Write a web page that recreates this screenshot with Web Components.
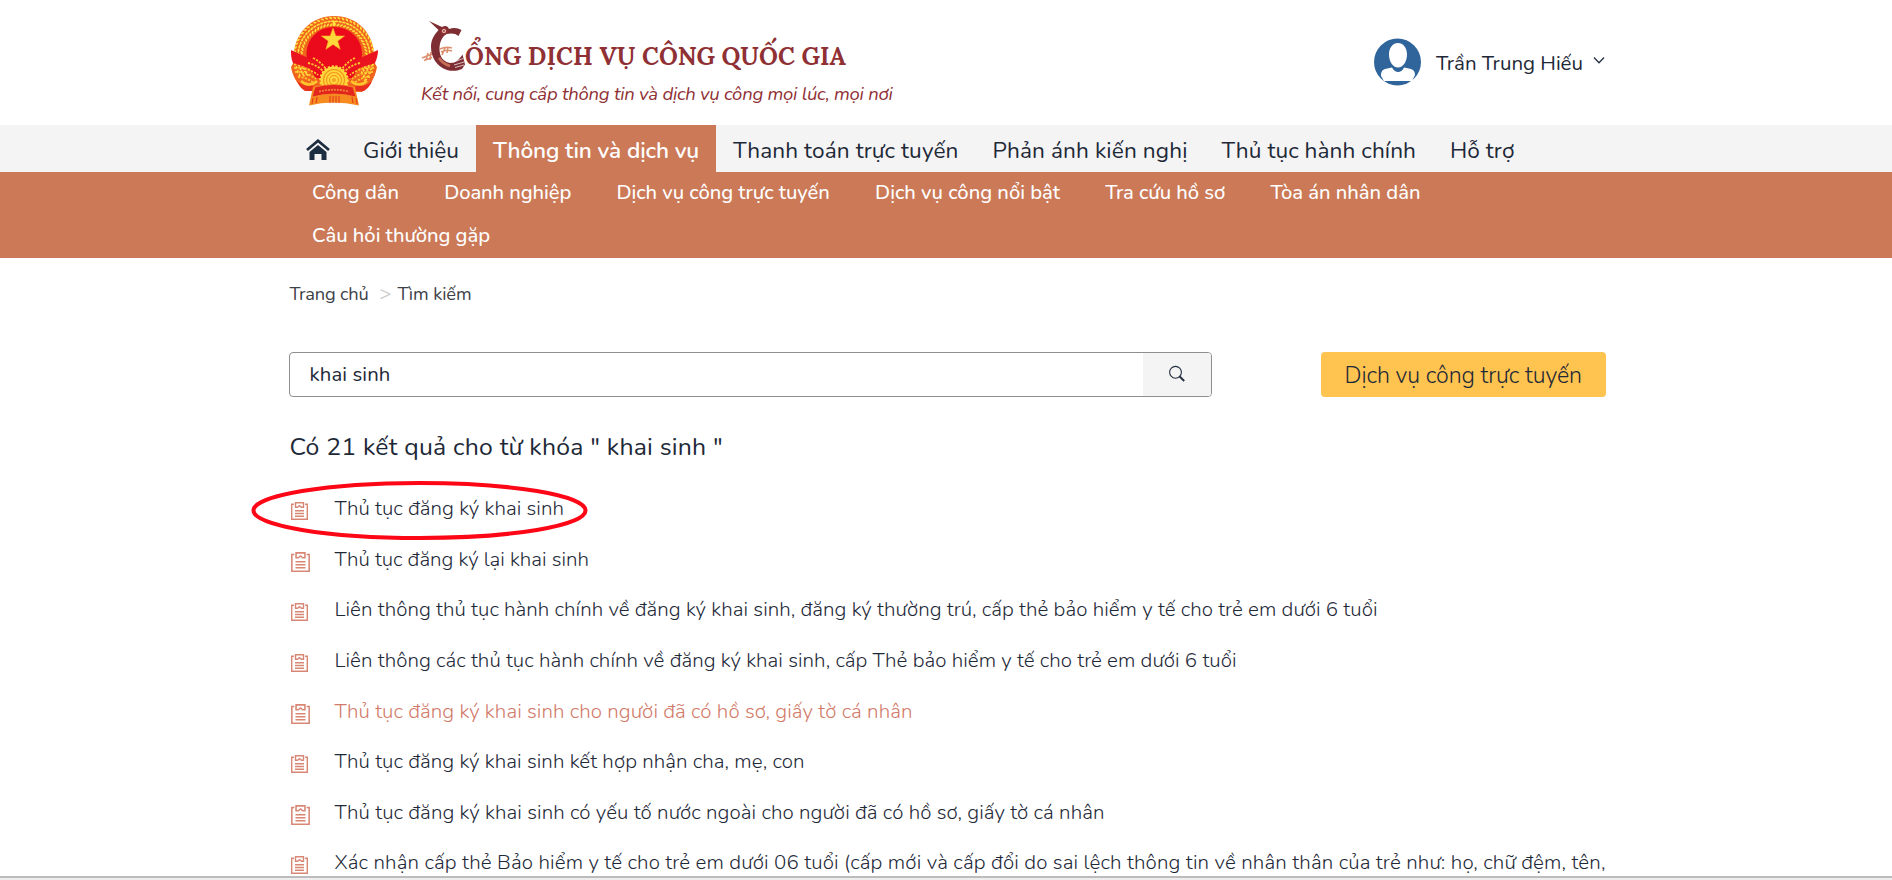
<!DOCTYPE html>
<html lang="vi">
<head>
<meta charset="utf-8">
<title>Cổng Dịch vụ công Quốc gia</title>
<style>
  :root {
    --ink: #1e2938;
    --brand: #cb7957;
    --maroon: #8f3034;
    --grey: #f4f4f4;
    --yellow: #ffc34f;
  }

  body {
    margin: 0;
    height: 880px;
    overflow: hidden;
    background: #fff;
    color: var(--ink);
    font-family: Nunito, 'Open Sans', 'Noto Sans', sans-serif;
  }
</style>
</head>
<body>
<portal-page>
  <portal-header slot="header" user="Trần Trung Hiếu"></portal-header>
  <portal-nav slot="nav"></portal-nav>
  <bread-crumb></bread-crumb>
  <search-bar value="khai sinh"></search-bar>
  <result-list></result-list>
</portal-page>

<script>
class BaseElement extends HTMLElement {
  constructor() {
    super();
    this.attachShadow({ mode: 'open' });
  }

  connectedCallback() {
    const template = document.createElement('template');
    template.innerHTML = this.render();
    this.shadowRoot.appendChild(template.content.cloneNode(true));
  }
}

// One line of text, tracked so that it fills the given width
class FitText extends BaseElement {
  connectedCallback() {
    super.connectedCallback();
    const span = this.shadowRoot.querySelector('span');
    const width = Number(this.getAttribute('width'));
    const count = this.textContent.length;
    const spacing = (width - span.getBoundingClientRect().width) / count;
    span.style.letterSpacing = `${spacing.toFixed(3)}px`;
  }

  render() {
    return `
      <style>
        :host { display: inline-block; white-space: nowrap; }
        span { display: inline-block; }
      </style>
      <span><slot></slot></span>
    `;
  }
}

class PortalPage extends BaseElement {
  render() {
    return `
      <style>
        :host { display: flex; flex-direction: column; height: 880px; }
        .view { height: 876px; overflow: hidden; flex: none; }
        main { margin: 0 286px 0 290px; }
        footer { height: 2px; flex: none; background: #eee; border-top: 2px solid #bcbcbc; }
      </style>
      <div class="view">
        <slot name="header"></slot>
        <slot name="nav"></slot>
        <main><slot></slot></main>
      </div>
      <footer></footer>
    `;
  }
}

class NationalEmblem extends BaseElement {
  render() {
    let grains = '';
    [32.5, 36, 39.5].forEach((r, row) => {
      for (let a = -215; a <= 35; a += 6) {
        const rad = ((a + row * 3) * Math.PI) / 180;
        const x = 48 + r * Math.cos(rad);
        const y = 44.5 + r * 0.98 * Math.sin(rad);
        grains += `<ellipse cx="${x.toFixed(1)}" cy="${y.toFixed(1)}" rx="1.8" ry=".9" transform="rotate(${a + 50 + row * 40} ${x.toFixed(1)} ${y.toFixed(1)})"/>`;
      }
    });

    return `
      <style>
        :host { display: block; width: 98px; height: 98px; }
        svg { display: block; }
      </style>
      <svg width="98" height="98" viewBox="0 0 98 98">
        <path d="M48 4C25 4 8 22 8 44c0 5-1 8-3 11 2 12 8 19 16 24l55 1c7-5 13-13 15-25-2-3-3-6-3-11C88 22 72 4 48 4z" fill="#f0641d"/>
        <g fill="#ffe03e">${grains}</g>
        <path d="M48 15C32 15 20.500 27 20.500 42c0 8 3.500 16 9.500 24h36c6-8 10-16 10-24C76 27 64 15 48 15z" fill="#ea0a1c"/>
        <path d="M5 38l28 13 7 6-3 4-8-3L7 51c-2-4-2-9-2-13zM92 38L63 51l-7 6 3 4 8-3 22-7c2-4 3-9 3-13z" fill="#ea1420"/>
        <g fill="none" stroke="#ffc52f" stroke-width="1.800" stroke-dasharray="2.200 1.300">
          <path d="M8 56q12-2 24 7M9 60q10-1 21 7M12 65q8 0 16 6M27 46q8 4 13 11M22 51q9 2 15 8"/>
          <path d="M88 56q-12-2-24 7M87 60q-10-1-21 7M84 65q-8 0-16 6M69 46q-8 4-13 11M74 51q-9 2-15 8"/>
        </g>
        <path d="M47 16l2.800 7.900 8.700.1-6.800 5.100 2.500 8.200-7.200-4.900-7.100 4.900 2.400-8.200-6.900-5.100 8.800-.1z" fill="#ffd93c" stroke="#f8ae25" stroke-width=".6"/>
        <path d="M48 9v5" stroke="#ffe23e" stroke-width="2.500"/>
        <circle cx="48" cy="68" r="13.500" fill="#ffd63b" stroke="#ffd63b" stroke-width="2.400" stroke-dasharray="2.200 1.600"/>
        <g fill="none" stroke="#f2941d" stroke-width="1.100"><circle cx="48" cy="68" r="10.500"/><circle cx="48" cy="68" r="7.500"/><circle cx="48" cy="68" r="4.500"/></g>
        <circle cx="48" cy="68" r="2" fill="#f2a325"/>
        <path d="M11 69q8 7 15 4l5 6H19q-6-4-8-10zM86 69q-8 7-15 4l-5 6h12q6-4 8-10z" fill="#e9301f"/>
        <path d="M15 69q8 7 16 0M81 69q-8 7-16 0" fill="none" stroke="#ffc52e" stroke-width="2.400"/>
        <path d="M27 75l-4 18.500q24-6 50 0l-4-18.500q-21-5-42 0z" fill="#f68b20"/>
        <path d="M29 75q19-5 38 0l3 10q-22-6-44 0z" fill="#e3261d" stroke="#f6952a" stroke-width=".7"/>
        <path d="M33 79.500q15-3.500 30 0" fill="none" stroke="#f0803a" stroke-width="1.800" stroke-dasharray="2 1"/>
        <path d="M27 86l-1 6M31 85l-1 6M66 85l1 6M70 86l1 6M44 84v7M47 84v7M50 84v7M53 84v7" stroke="#e4341d" stroke-width="1"/>
      </svg>
    `;
  }
}

// Decorative bird curled in front of the site title
class BirdMark extends BaseElement {
  render() {
    return `
      <style>
        :host { display: block; width: 60px; height: 60px; }
        svg { display: block; }
      </style>
      <svg width="60" height="60" viewBox="0 0 60 60">
        <g stroke="#dc9070" stroke-width="1.600" fill="none">
          <path d="M7 43l10-4M9 45.500l8-3M13 38l-2 7M16 37l-1 8"/>
          <path d="M25 34q6-3 12-1M26 37q5-3 11-1M27 40l3-7M32 38l1-6"/>
        </g>
        <path d="M14 6l13 6c3-2 6-1 7 2 5-2 9-1 12.500 1l-3 6c-3-3-8-3-12-2-5 3-7 9-7 15 0 8 4 13 11 14 5 0 9-4 12-8.500l2.500 10-3 4.500c-5 2-10 2.500-15 1C22 52 16 42 16 32c0-7 3-12 7.500-17z" fill="#7e2d33"/>
        <path d="M38 47.500l10-4M39 50l10-3M40 52.500l9-2.500" stroke="#fff" stroke-width=".7"/>
        <path d="M24 43q4 6 11 8" stroke="#c96d57" stroke-width="2.600" fill="none"/>
        <circle cx="29" cy="16" r="3.800" fill="#8f3034"/>
        <circle cx="29" cy="16" r="2" fill="#f2cdc2"/>
        <circle cx="29" cy="16" r=".9" fill="#8f3034"/>
      </svg>
    `;
  }
}

class PortalHeader extends BaseElement {
  render() {
    return `
      <style>
        :host { display: flex; height: 125px; padding: 0 286px 0 286px; box-sizing: border-box; }
        national-emblem { margin-top: 12px; }
        .brand { margin-left: 31px; padding-top: 15px; color: var(--maroon); flex: 1; }
        .title { display: flex; height: 60px; }
        .title fit-text {
          margin: 20px 0 0 -10px;
          font: 700 24.500px/42px Lora, 'Liberation Serif', serif;
        }
        .tagline { margin: 5px 0 0 6px; font-style: italic; font-size: 18.500px; line-height: 28px; }
        .user { display: flex; height: 47px; margin-top: 38px; }
        .user fit-text { margin-left: 15px; font-size: 20.500px; line-height: 51px; }
        .chevron { margin: 18px 0 0 10px; }
      </style>
      <national-emblem></national-emblem>
      <div class="brand">
        <div class="title">
          <bird-mark></bird-mark>
          <fit-text width="381">ỔNG DỊCH VỤ CÔNG QUỐC GIA</fit-text>
        </div>
        <div class="tagline"><fit-text width="471.500">Kết nối, cung cấp thông tin và dịch vụ công mọi lúc, mọi nơi</fit-text></div>
      </div>
      <div class="user">
        <svg width="47" height="48" viewBox="0 0 47 48">
          <circle cx="23.500" cy="24" r="23.500" fill="#30659b"/>
          <path d="M24 5c5 0 9 4.500 9 11.500S29 29.500 24 29.500 15 23.500 15 16.500 19 5 24 5zM7 38c0-4 1-6 4-7l7-1.500c2 3.500 4 4.500 6 4.500s5-1.500 6-4.500l7 1.500c3 1 4 3 4 6l-3 6H10z" fill="#fff"/>
        </svg>
        <fit-text width="147">${this.getAttribute('user')}</fit-text>
        <svg class="chevron" width="13" height="10" viewBox="0 0 13 10"><path d="M1 1.500l5 5.200 5-5.200" fill="none" stroke="#242f40" stroke-width="1.300"/></svg>
      </div>
    `;
  }
}

class PortalNav extends BaseElement {
  render() {
    const items = [
      ['Giới thiệu', 96],
      ['Thông tin và dịch vụ', 206],
      ['Thanh toán trực tuyến', 225.5],
      ['Phản ánh kiến nghị', 195],
      ['Thủ tục hành chính', 194.5],
      ['Hỗ trợ', 64.5]
    ];
    const rows = [
      [['Công dân', 87], ['Doanh nghiệp', 127], ['Dịch vụ công trực tuyến', 213.5], ['Dịch vụ công nổi bật', 185], ['Tra cứu hồ sơ', 120], ['Tòa án nhân dân', 150]],
      [['Câu hỏi thường gặp', 178]]
    ];

    return `
      <style>
        :host { display: block; }
        nav { display: flex; height: 47px; padding-left: 290px; background: var(--grey); font-size: 22.600px; line-height: 51px; }
        .home { width: 24px; height: 21px; padding: 14px 16px 0; }
        .item { padding: 0 17px; }
        .active { background: var(--brand); color: #fff; font-weight: 600; }
        .sub { height: 86px; padding-left: 312px; background: var(--brand); color: #fff; font-size: 20.200px; font-weight: 500; }
        .row { display: flex; gap: 45.200px; height: 43px; line-height: 42px; }
      </style>
      <nav>
        <svg class="home" viewBox="0 0 24 21">
          <path d="M1 11L12 1.800 23 11" fill="none" stroke="#1d2d40" stroke-width="2.800"/>
          <path d="M12 6l8.500 7v8h-5v-6h-7v6h-5v-8z" fill="#1d2d40"/>
        </svg>
        ${items.map(([label, width], i) => `<span class="item ${i === 1 ? 'active' : ''}"><fit-text width="${width}">${label}</fit-text></span>`).join('')}
      </nav>
      <div class="sub">
        ${rows.map(row => `<div class="row">${row.map(([label, width]) => `<fit-text width="${width}">${label}</fit-text>`).join('')}</div>`).join('')}
      </div>
    `;
  }
}

class BreadCrumb extends BaseElement {
  render() {
    return `
      <style>
        :host { display: flex; margin-left: -.5px; padding-top: 22px; height: 28px; font-size: 18.300px; line-height: 28px; color: #3d4148; }
        .sep { width: 11px; margin: 0 7px 0 11px; color: #ccc; font-size: 20px; }
      </style>
      <fit-text width="79">Trang chủ</fit-text>
      <span class="sep">&gt;</span>
      <fit-text width="74">Tìm kiếm</fit-text>
    `;
  }
}

class SearchBar extends BaseElement {
  render() {
    return `
      <style>
        :host { display: flex; justify-content: space-between; margin: 44px 0 0 -1px; height: 45px; }
        .field {
          display: flex;
          justify-content: space-between;
          width: 923px;
          box-sizing: border-box;
          padding-left: 19.500px;
          border: 1px solid #8f8f93;
          border-radius: 4px;
          overflow: hidden;
          font-size: 20.300px;
          line-height: 43px;
        }
        .go { display: flex; width: 68px; background: var(--grey); }
        .go svg { margin: 12px 0 0 25px; }
        .online { width: 285px; border-radius: 4px; background: var(--yellow); font-size: 23.200px; line-height: 48px; font-weight: 300; }
        .online fit-text { margin-left: 23.500px; }
      </style>
      <div class="field">
        <fit-text width="81">${this.getAttribute('value')}</fit-text>
        <div class="go">
          <svg width="18" height="18" viewBox="0 0 18 18" fill="none" stroke="#242f40">
            <circle cx="7.500" cy="7.300" r="5.900" stroke-width="1.100"/>
            <path d="M11.700 11.500l4.500 4.500" stroke-width="1.900"/>
          </svg>
        </div>
      </div>
      <div class="online"><fit-text width="237.500">Dịch vụ công trực tuyến</fit-text></div>
    `;
  }
}

class ResultItem extends BaseElement {
  render() {
    const size = this.hasAttribute('large') ? 19 : 17;

    return `
      <style>
        :host { display: flex; height: 50.600px; font-size: 20.500px; font-weight: 300; line-height: 53px; }
        :host([active]) { color: #d27a69; }
        .icon { width: 44.500px; flex: none; padding: 19.500px 0 0 .5px; box-sizing: border-box; }
        svg { display: block; }
      </style>
      <div class="icon">
        <svg width="${size}" height="${size + 1}" viewBox="0 0 17 18" fill="none" stroke="#d88775" stroke-width="1.400">
          <path d="M3 2.200H.7v15.100h15.600V2.200H14"/>
          <path d="M4.500 .8h8v4.400h-2L8.500 3.600 6.500 5.200h-2z"/>
          <path d="M4 8.700h9M4 11.500h9M4 14.200h9"/>
        </svg>
      </div>
      <fit-text width="${this.getAttribute('width')}">${this.textContent}</fit-text>
    `;
  }
}

class ResultList extends BaseElement {
  render() {
    const results = [
      ['Thủ tục đăng ký khai sinh', 229.5, ''],
      ['Thủ tục đăng ký lại khai sinh', 254.5, 'large'],
      ['Liên thông thủ tục hành chính về đăng ký khai sinh, đăng ký thường trú, cấp thẻ bảo hiểm y tế cho trẻ em dưới 6 tuổi', 1043, ''],
      ['Liên thông các thủ tục hành chính về đăng ký khai sinh, cấp Thẻ bảo hiểm y tế cho trẻ em dưới 6 tuổi', 902, ''],
      ['Thủ tục đăng ký khai sinh cho người đã có hồ sơ, giấy tờ cá nhân', 578, 'large active'],
      ['Thủ tục đăng ký khai sinh kết hợp nhận cha, mẹ, con', 470, ''],
      ['Thủ tục đăng ký khai sinh có yếu tố nước ngoài cho người đã có hồ sơ, giấy tờ cá nhân', 770, 'large'],
      ['Xác nhận cấp thẻ Bảo hiểm y tế cho trẻ em dưới 06 tuổi (cấp mới và cấp đổi do sai lệch thông tin về nhân thân của trẻ như: họ, chữ đệm, tên,', 1271, '']
    ];

    return `
      <style>
        :host { display: block; position: relative; padding-top: 29px; }
        h2 { margin: 0 0 16.300px -.5px; height: 40px; font-size: 24.800px; font-weight: 400; line-height: 43px; }
        .mark { position: absolute; left: -39.500px; top: 83.500px; }
      </style>
      <h2><fit-text width="433.500">Có 21 kết quả cho từ khóa " khai sinh "</fit-text></h2>
      ${results.map(([label, width, flags]) => `<result-item width="${width}" ${flags}>${label}</result-item>`).join('')}
      <svg class="mark" width="337" height="60" viewBox="0 0 337 60">
        <ellipse cx="168.500" cy="29.500" rx="166" ry="27.500" fill="none" stroke="#fd0615" stroke-width="4"/>
      </svg>
    `;
  }
}

window.customElements.define('fit-text', FitText);
window.customElements.define('national-emblem', NationalEmblem);
window.customElements.define('bird-mark', BirdMark);
window.customElements.define('portal-header', PortalHeader);
window.customElements.define('portal-nav', PortalNav);
window.customElements.define('bread-crumb', BreadCrumb);
window.customElements.define('search-bar', SearchBar);
window.customElements.define('result-item', ResultItem);
window.customElements.define('result-list', ResultList);
window.customElements.define('portal-page', PortalPage);
</script>
</body>
</html>
